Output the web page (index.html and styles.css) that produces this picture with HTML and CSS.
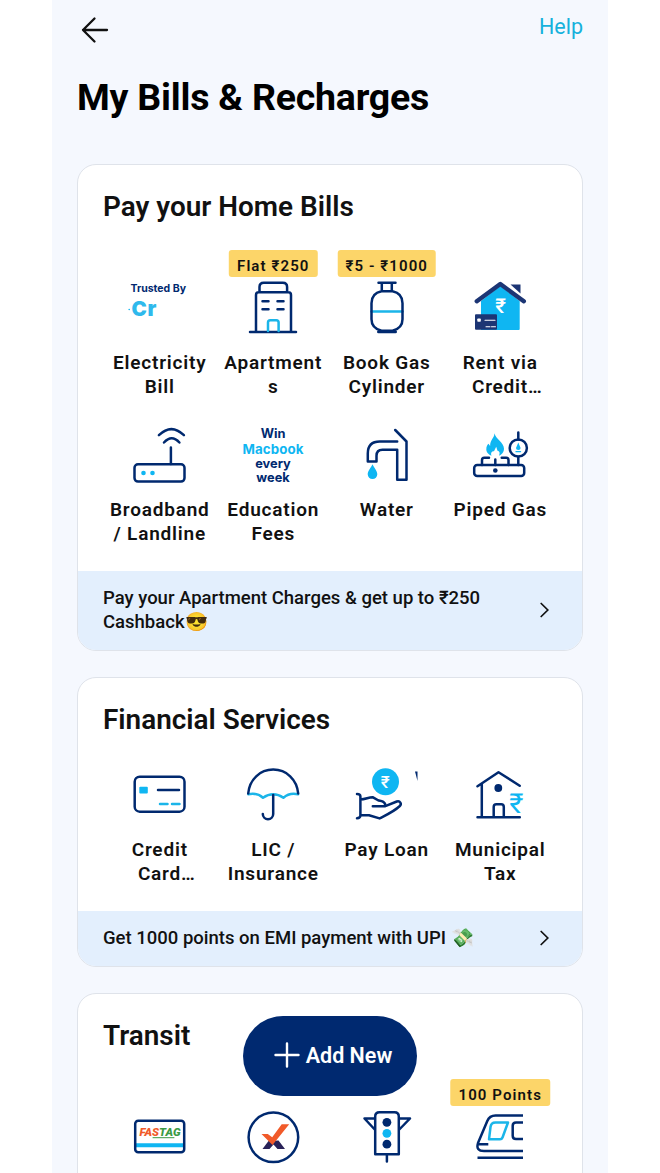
FILE: index.html
```html
<!DOCTYPE html>
<html lang="en">
  <head>
    <meta charset="UTF-8" />
    <meta name="viewport" content="width=device-width, initial-scale=1" />
    <title>My Bills & Recharges</title>
    <link rel="stylesheet" href="styles.css">
  </head>
  <body>
    <div class="app">
      <header class="topbar">
        <svg class="back" viewBox="0 0 28 28">
          <path d="M26 14H2M13.5 2.5L2 14l11.5 11.5" />
        </svg>
        <a class="help">Help</a>
      </header>
      <h1>My Bills &amp; Recharges</h1>

      <section class="card">
        <h2>Pay your Home Bills</h2>
        <div class="grid with-badges">
          <div class="tile">
            <div class="icon">
              <svg viewBox="0 0 60 60">
                <text class="promo navy-fill" x=".5" y="13.5" font-size="10.5" textLength="55.5">Trusted By</text>
                <text class="promo cr" x="1.5" y="37.5" font-size="20.5" textLength="25">Cr</text>
                <circle class="cyan-fill" cx="-.8" cy="31.5" r=".8" />
              </svg>
            </div>
            <div class="label">Electricity<br>Bill</div>
          </div>
          <div class="tile">
            <div class="icon">
              <span class="badge">Flat ₹250</span>
              <svg viewBox="0 0 60 60">
                <path d="M7 54h46M13 54V17q0-2.700 2.700-2.700h29.600q2.700 0 2.700 2.700V54M16.500 14V9q0-4.300 4.300-4.300h19q4.300 0 4.300 4.300v5" />
                <path d="M19.500 23.300h6M34.500 23.300h6M19.500 31.300h6M34.500 31.300h6" />
                <path class="cyan" d="M25 53V44.500q0-2.300 2.300-2.300h6q2.300 0 2.300 2.300V53" />
              </svg>
            </div>
            <div class="label">Apartment<br>s</div>
          </div>
          <div class="tile">
            <div class="icon">
              <span class="badge">₹5 - ₹1000</span>
              <svg viewBox="0 0 60 60">
                <path class="cyan" d="M14.500 33.500h31" />
                <path d="M21.500 4.800h17M24.800 5v8M34.800 5v8M24.500 13.300h11q10 2 10 12v16q0 9-10 11.500h-11q-10-2.500-10-11.500v-16q0-10 10-12z" />
                <path d="M21.500 53.800h17" stroke-width="3" />
              </svg>
            </div>
            <div class="label">Book Gas<br>Cylinder</div>
          </div>
          <div class="tile">
            <div class="icon">
              <svg viewBox="0 0 60 60">
                <path class="cyan-fill" d="M11 23L30.300 8l19.400 15v28q0 1-1 1H11z" />
                <path class="roof-fill" d="M40.500 6.500h10v9z" />
                <path class="roof" d="M6.800 23.300L30.300 6l23.500 17.300" />
                <rect class="roof-fill" x="5" y="36.300" width="22" height="15.500" rx="1" />
                <rect class="white-fill" x="7.300" y="40.500" width="3.500" height="3.300" rx=".7" />
                <path class="thin" d="M15 42.300h10M16 48.800h4M21.500 48.800h4" />
                <text class="rupee white-fill" x="25.300" y="34.500" font-size="20.500">₹</text>
              </svg>
            </div>
            <div class="label">Rent via<br><span class="cut">Credit…</span></div>
          </div>
          <div class="tile">
            <div class="icon">
              <svg viewBox="0 0 60 60">
                <rect x="4.500" y="39.300" width="50" height="17.300" rx="3.500" />
                <path d="M40.900 22.500v16.500M34 17.500q7.700-8.500 15.400 0M28.900 10.200q12.500-12.200 25 0" />
                <circle class="cyan-fill" cx="13.500" cy="48" r="2.300" />
                <circle class="cyan-fill" cx="22.500" cy="48" r="2.300" />
              </svg>
            </div>
            <div class="label">Broadband<br>/ Landline</div>
          </div>
          <div class="tile">
            <div class="icon">
              <svg viewBox="0 0 60 60">
                <g class="promo navy-fill" text-anchor="middle" font-size="12.800">
                  <text x="30" y="12.800">Win</text>
                  <text class="cyan-fill" x="30" y="28.800" font-size="13.300" textLength="61">Macbook</text>
                  <text x="30" y="42.500">every</text>
                  <text x="30" y="56.700">week</text>
                </g>
              </svg>
            </div>
            <div class="label">Education<br>Fees</div>
          </div>
          <div class="tile">
            <div class="icon">
              <svg viewBox="0 0 60 60">
                <path d="M38.200 5l11.300 11.500v38.200h-9.300v-30H25.500q-6 0-6 6v5.800h-8.700V28.500q0-12 12-12h17.400" />
                <path class="cyan-fill" d="M15.500 39.300c1.500 3.500 4.800 6.500 4.800 10a4.800 4.800 0 0 1-9.600 0c0-3.500 3.300-6.500 4.800-10z" />
              </svg>
            </div>
            <div class="label">Water</div>
          </div>
          <div class="tile">
            <div class="icon">
              <svg viewBox="0 0 60 60">
                <rect x="4.200" y="40" width="50" height="11" rx="3" />
                <path d="M12 40v-5q0-2.300 2.300-2.300H19M31.700 32.700h4.500q2.300 0 2.300 2.300v5M25.300 34.500V40M48.300 7.500v7M48.300 32v8" />
                <circle cx="48.300" cy="23" r="8.600" />
                <circle class="navy-fill" cx="25.300" cy="45.500" r="2.300" />
                <path class="cyan-fill" d="M24.500 8.300c1 6 9.500 9 9.500 15.500 0 3.800-2.500 6-5 6.900 1.300-3 .5-4.500-1.500-5l-1.300-4-2.200 4.500c-2.500 0-3.500 2-2.500 4.500-2.700-1-5.200-3.400-5.200-6.500 0-3 1.200-4.500 2.200-5.500l1.600 2.400c0-6.800 4.200-7.600 4.400-12.800z" />
                <path class="cyan-fill" d="M48.300 17.500l2.300 5.500q0 2-2.300 2t-2.300-2zM45.500 26h5.600v1.300h-5.600z" />
              </svg>
            </div>
            <div class="label">Piped Gas</div>
          </div>
        </div>
        <div class="banner">
          <p>Pay your Apartment Charges &amp; get up to ₹250<br>Cashback😎</p>
          <svg class="chevron" viewBox="0 0 9 16"><path d="M1.200 1.500L7.800 8l-6.600 6.500" /></svg>
        </div>
      </section>

      <section class="card">
        <h2>Financial Services</h2>
        <div class="grid">
          <div class="tile">
            <div class="icon">
              <svg viewBox="0 0 60 60">
                <rect x="4.700" y="11.700" width="49.800" height="35" rx="5" />
                <rect class="cyan-fill" x="9.300" y="21.700" width="8.500" height="6.800" rx="1" />
                <path d="M28 24.900h21" />
                <path class="cyan" d="M30 38.900h7.500M42 38.900h7.500" />
              </svg>
            </div>
            <div class="label">Credit<br><span class="cut">Card…</span></div>
          </div>
          <div class="tile">
            <div class="icon">
              <svg viewBox="0 0 60 60">
                <path class="cyan" d="M5.300 29.300q8.500-2 14.700 3.500 5-3.500 10.200-3.500t10.200 3.500q6-5.500 14.700-3.500" />
                <path d="M5.200 28.500C6.500 14.500 17 4.600 30.200 4.600s23.700 9.900 25 23.900M30.200 30v19a5.200 5.200 0 0 1-10.400 0" />
              </svg>
            </div>
            <div class="label">LIC /<br>Insurance</div>
          </div>
          <div class="tile">
            <div class="icon">
              <svg viewBox="0 0 60 60">
                <circle class="cyan-fill" cx="28.500" cy="16.700" r="13.500" />
                <text class="rupee white-fill" x="23.700" y="22.500" font-size="17">₹</text>
                <path d="M0 29q3.400 0 3.400 2.500v19q0 2.500-3.400 2.800M3.500 34.500c5 0 8.500-2.500 12.500-2.200l5.500 3.200c3.500.6 6.800 1 6.800 5.200M15.800 41.200h12.500l11.500-4.700c3.300-1 5.200 2.300 3 4.500-6 5.700-13 8.700-20.300 12.400L12 50.200H3.500" />
                <path class="navy-fill" d="M58 6.500h2.500v9.500z" />
              </svg>
            </div>
            <div class="label">Pay Loan</div>
          </div>
          <div class="tile">
            <div class="icon">
              <svg viewBox="0 0 60 60">
                <path d="M7.500 21.300L28.500 7.200l21.200 13.600M11.800 19v33.300M7.500 52.300h42.300M23.700 52V42q0-2.700 2.700-2.700h4.700q2.700 0 2.700 2.700v10" />
                <circle class="navy-fill" cx="28.300" cy="23" r="3.900" />
                <text class="rupee light cyan-fill" x="39.300" y="48" font-size="27.500">₹</text>
              </svg>
            </div>
            <div class="label">Municipal<br>Tax</div>
          </div>
        </div>
        <div class="banner">
          <p>Get 1000 points on EMI payment with UPI 💸</p>
          <svg class="chevron" viewBox="0 0 9 16"><path d="M1.200 1.500L7.800 8l-6.600 6.500" /></svg>
        </div>
      </section>

      <section class="card">
        <h2>Transit</h2>
        <div class="grid with-badges">
          <div class="tile">
            <div class="icon">
              <svg viewBox="0 0 60 60">
                <path class="cyan-fill" d="M5.500 36.200H54v4H5.500z" />
                <rect x="5.200" y="13.700" width="49" height="31.500" rx="3" />
                <text class="fastag" x="9.500" y="29" textLength="41" lengthAdjust="spacingAndGlyphs"><tspan class="orange-fill">FAS</tspan><tspan class="green-fill">TAG</tspan></text>
                <path class="green" d="M23 30.700h21" />
              </svg>
            </div>
          </div>
          <div class="tile">
            <div class="icon">
              <svg viewBox="0 0 60 60">
                <circle cx="30.400" cy="30.300" r="24.800" />
                <path class="plum-fill" d="M19.500 42l6-8 10-.5 6.500 8.500h-7.500l-4-4.500-4 4.500z" />
                <path class="orange-fill" d="M18.500 27h6.300l4.400 3.200 9.500-13h7.500L29.500 38z" />
              </svg>
            </div>
          </div>
          <div class="tile">
            <div class="icon">
              <svg viewBox="0 0 60 60">
                <path d="M18.200 47.300V9.500q0-4.300 4.300-4.300h15q4.300 0 4.300 4.300v37.800zM18.200 11.500H7.500L18.200 23M41.800 11.500h11.200L41.800 23M29.900 47.500v7" />
                <circle class="navy-fill" cx="29.900" cy="15.300" r="4.400" />
                <circle class="cyan-fill" cx="29.900" cy="26.300" r="4.400" />
                <circle class="navy-fill" cx="29.900" cy="37.200" r="4.400" />
              </svg>
            </div>
          </div>
          <div class="tile">
            <div class="icon">
              <svg viewBox="0 0 60 60">
                <path class="butt" d="M53 8.500H25.500q-6 0-8.200 5.500L8 36q-2.500 8 6 8h39M8 37.300h10.300M7.500 50.800H53M53 15.500h-7q-3.300 0-3.300 3.300v10q0 3.300 3.300 3.300h7" />
                <path class="cyan" d="M25.500 15.500H38l-5.500 15q-.7 1.800-2.500 1.800H19l1.500-12.300q.5-4.500 5-4.500z" />
              </svg>
              <span class="badge">100 Points</span>
            </div>
          </div>
        </div>
      </section>

      <button class="add-new">
        <svg viewBox="0 0 26 26"><path d="M13 1.500v23M1.500 13h23" /></svg>
        Add New
      </button>
    </div>
  </body>
</html>
```
FILE: styles.css
```css
* {
  box-sizing: border-box;
}
body {
  margin: 0;
  height: 1173px;
  overflow: hidden;
  background: #fff;
  font-family: Roboto, Arial, sans-serif;
  color: #111;
}
.app {
  position: relative;
  width: 556px;
  height: 1173px;
  margin: 0 auto;
  padding: 0 25px;
  overflow: hidden;
  background: #f5f8fe;
}
.topbar {
  display: flex;
  justify-content: space-between;
  align-items: flex-start;
  height: 73px;
  padding-top: 12px;
}
.back {
  width: 28px;
  height: 28px;
  margin: 4px 0 0 4px;
  fill: none;
  stroke: #111;
  stroke-width: 2.3;
  stroke-linecap: round;
  stroke-linejoin: round;
}
.help {
  color: #16b1dc;
  font-size: 21.5px;
  line-height: 29px;
}
h1 {
  margin: 0 0 43px;
  color: #000;
  font-size: 37.5px;
  font-weight: 700;
  line-height: 49px;
  height: 48px;
  letter-spacing: -0.22px;
  white-space: nowrap;
}
.card {
  width: 506px;
  margin-bottom: 26px;
  border: 1px solid #dfe3ea;
  border-radius: 19px;
  background: #fff;
  overflow: hidden;
}
h2 {
  margin: 0;
  padding: 24px 25px 1px;
  font-size: 27.9px;
  font-weight: 650;
  line-height: 36px;
}
.grid {
  display: grid;
  grid-template-columns: repeat(4, 1fr);
  row-gap: 27px;
  padding: 26px 25px;
}
.with-badges {
  padding-top: 52px;
}
.icon {
  position: relative;
  display: flex;
  justify-content: center;
  height: 60px;
}
.icon svg {
  width: 60px;
  height: 60px;
  margin-right: 0.5px;
  overflow: visible;
  fill: none;
  stroke: #00296f;
  stroke-width: 2.5;
  stroke-linecap: round;
  stroke-linejoin: round;
}
.icon .cyan {
  stroke: #1bb5e9;
}
.icon .green {
  stroke: #3c9b45;
  stroke-width: 1;
}
.icon .roof {
  stroke: #1c3574;
  stroke-width: 4.4;
}
.icon .thin {
  stroke: #fff;
  stroke-width: 1.1;
}
.icon .butt {
  stroke-linecap: butt;
}
.icon text,
.icon .navy-fill,
.icon .cyan-fill,
.icon .white-fill,
.icon .roof-fill,
.icon .plum-fill,
.icon .orange-fill,
.icon .green-fill {
  stroke: none;
}
.navy-fill {
  fill: #00296f;
}
.cyan-fill {
  fill: #0fb6f2;
}
.white-fill {
  fill: #fff;
}
.roof-fill {
  fill: #1c3574;
}
.plum-fill {
  fill: #292258;
}
.orange-fill {
  fill: #f15a29;
}
.green-fill {
  fill: #3c9b45;
}
.promo {
  font-family: Inter, sans-serif;
  font-weight: 700;
}
.cr {
  fill: #2fb9ec;
  font-weight: 900;
}
.rupee {
  font-weight: 500;
}
.light {
  font-weight: 400;
}
.fastag {
  font-size: 11px;
  font-style: italic;
  font-weight: 900;
}
.badge {
  position: absolute;
  bottom: 61px;
  left: 50%;
  transform: translateX(-50%);
  height: 27px;
  padding: 4px 8px 0 8px;
  border-radius: 3px;
  background: #fcd569;
  font-size: 15px;
  font-weight: 650;
  line-height: 25px;
  letter-spacing: 1.1px;
  white-space: nowrap;
}
.label {
  height: 48px;
  margin-top: 12px;
  padding-top: 1px;
  font-size: 19px;
  font-weight: 600;
  line-height: 24px;
  letter-spacing: 0.8px;
  text-align: center;
  white-space: nowrap;
}
.cut {
  padding-left: 14px;
}
.banner {
  display: flex;
  justify-content: space-between;
  align-items: center;
  padding: 15px 33px 16px 25px;
  background: #e3effd;
}
.banner p {
  margin: 0;
  font-size: 18.5px;
  font-weight: 500;
  line-height: 24px;
  white-space: nowrap;
}
.chevron {
  width: 9px;
  height: 16px;
  fill: none;
  stroke: #111;
  stroke-width: 1.7;
  stroke-linecap: round;
}
.add-new {
  position: absolute;
  top: 1016px;
  left: 191px;
  display: flex;
  align-items: center;
  justify-content: center;
  gap: 6px;
  width: 174px;
  height: 80px;
  padding: 0 0 2px 6px;
  border: none;
  border-radius: 40px;
  background: #002970;
  color: #fff;
  font-family: inherit;
  font-size: 21.5px;
  font-weight: 650;
  white-space: nowrap;
}
.add-new svg {
  width: 26px;
  height: 26px;
  stroke: #fff;
  stroke-width: 2.4;
  stroke-linecap: round;
}
```
